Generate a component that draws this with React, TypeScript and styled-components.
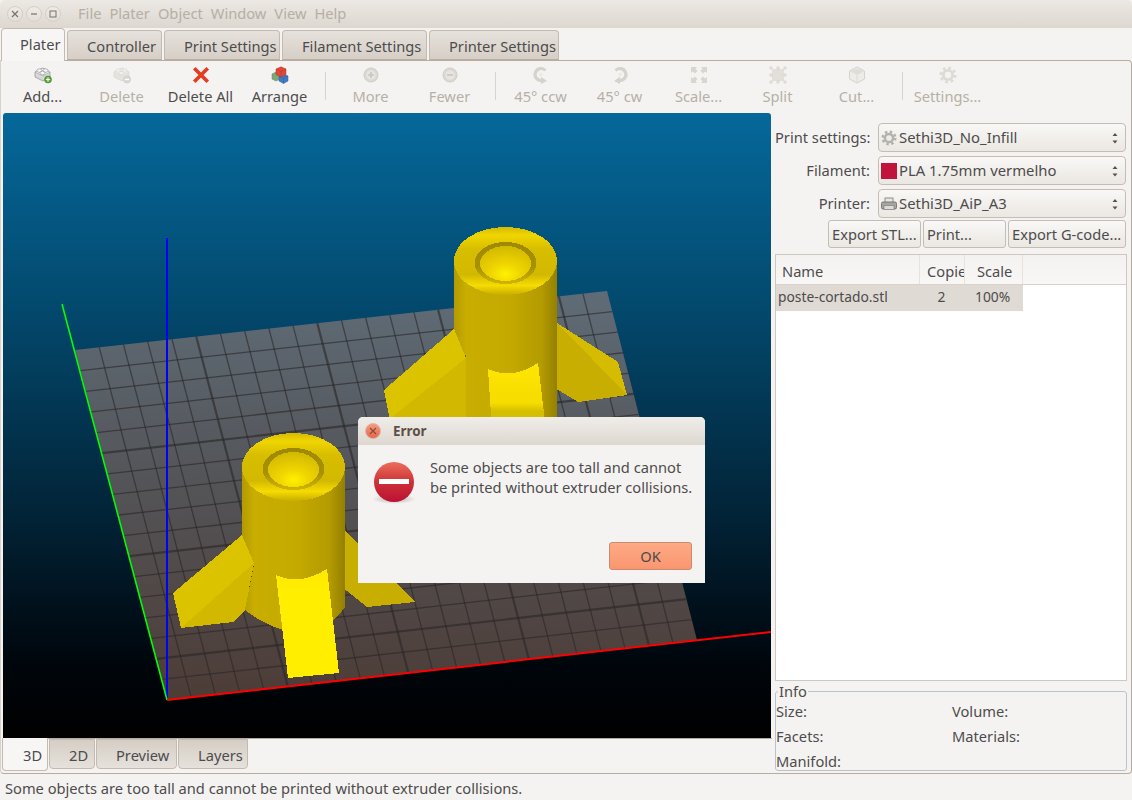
import React from "react";
import styled, { createGlobalStyle } from "styled-components";

const Global = createGlobalStyle`
  html, body { margin: 0; padding: 0; background: #f5f3f1; }
  * { box-sizing: border-box; }
  #root { width: 1132px; height: 800px; overflow: hidden; }
`;

const Page = styled.div`
  position: relative;
  width: 1132px;
  height: 800px;
  display: flex;
  flex-direction: column;
  background: #f5f3f1;
  color: #4c4c4c;
  font-family: "Noto Sans", "Open Sans", sans-serif;
  font-size: 14.67px;
  line-height: 17px;
`;

const TitleBar = styled.div`
  height: 28px;
  flex: none;
  display: flex;
  align-items: center;
  padding-left: 7px;
  background: linear-gradient(#ece8e3, #ddd7d0);
  border-radius: 5px 5px 0 0;
`;

const WinButtons = styled.div`
  display: flex;
  gap: 3px;
  margin-right: 17px;
`;

const WinButton = styled.div`
  width: 16px;
  height: 16px;
  border-radius: 50%;
  border: 1px solid #d5cfc7;
  background: linear-gradient(#efebe6, #e3ded7);
  display: flex;
  align-items: center;
  justify-content: center;
`;

const MenuBar = styled.div`
  display: flex;
  gap: 8px;
  margin-bottom: 2px;
`;

const MenuItem = styled.span`
  color: #b4afa6;
`;

const TabStrip = styled.div`
  height: 32px;
  flex: none;
  display: flex;
  align-items: flex-end;
  gap: 2px;
  padding-left: 1px;
  position: relative;
  z-index: 1;
`;

const Tab = styled.div<{ $w: number; $active?: boolean }>`
  width: ${(p) => p.$w}px;
  height: ${(p) => (p.$active ? 33 : 30)}px;
  margin-bottom: ${(p) => (p.$active ? -1 : 0)}px;
  padding-left: ${(p) => (p.$active ? 18 : 19)}px;
  padding-top: 7px;
  border: 1px solid #c4bbb0;
  border-bottom: ${(p) => (p.$active ? "none" : "1px solid #b8ad9f")};
  border-radius: 4px 4px 0 0;
  background: ${(p) => (p.$active ? "#f7f6f4" : "linear-gradient(#e6e1db, #d6cfc7)")};
  white-space: nowrap;
`;

const Notebook = styled.div`
  height: 714px;
  flex: none;
  display: flex;
  flex-direction: column;
  border: 1px solid #b8ad9f;
  border-left-color: #d8d2ca;
  border-radius: 0 4px 4px 4px;
  background: #f5f3f1;
`;

const Toolbar = styled.div`
  height: 52px;
  flex: none;
  display: flex;
  padding-left: 2px;
`;

const ToolItem = styled.div<{ $off?: boolean }>`
  width: 79px;
  display: flex;
  flex-direction: column;
  align-items: center;
  padding-top: 5px;
  color: ${(p) => (p.$off ? "#b5b0a6" : "#4c4c4c")};
  white-space: nowrap;
`;

const ToolIcon = styled.svg`
  width: 18px;
  height: 18px;
  flex: none;
  margin-bottom: 4px;
`;

const ToolSep = styled.div`
  width: 12px;
  display: flex;
  justify-content: center;
  padding: 11px 0 13px;
  &::before {
    content: "";
    width: 1px;
    background: #d8d3cc;
  }
`;

const Body = styled.div`
  flex: 1;
  display: flex;
  padding-left: 2px;
  min-height: 0;
`;

const LeftColumn = styled.div`
  width: 769px;
  flex: none;
  display: flex;
  flex-direction: column;
`;

const Canvas = styled.svg`
  display: block;
  width: 768px;
  height: 625px;
  flex: none;
  border-radius: 3px 3px 0 0;
`;

const BottomTabs = styled.div`
  height: 33px;
  display: flex;
  gap: 1px;
  margin-left: -1px;
  border-top: 1px solid #b8ad9f;
  position: relative;
`;

const BottomTab = styled.div<{ $w: number; $active?: boolean }>`
  width: ${(p) => p.$w}px;
  height: ${(p) => (p.$active ? 33 : 30)}px;
  margin-top: ${(p) => (p.$active ? -1 : 0)}px;
  padding: ${(p) => (p.$active ? 9 : 7)}px 0 0 ${(p) => (p.$active ? 20 : 19)}px;
  border: 1px solid #c4bbb0;
  border-top: ${(p) => (p.$active ? "none" : "1px solid #c4bbb0")};
  border-radius: 0 0 4px 4px;
  background: ${(p) => (p.$active ? "#f7f6f4" : "linear-gradient(#d5cec6, #e6e1db)")};
`;

const RightColumn = styled.div`
  width: 352px;
  flex: none;
  margin-left: 3px;
  padding-top: 10px;
  display: flex;
  flex-direction: column;
`;

const FormGrid = styled.div`
  display: grid;
  grid-template-columns: 95px 248px;
  grid-auto-rows: 29px;
  column-gap: 8px;
  row-gap: 4px;
`;

const FormLabel = styled.label`
  text-align: right;
  align-self: center;
  white-space: nowrap;
`;

const Combo = styled.div`
  display: flex;
  align-items: center;
  gap: 2px;
  padding: 0 6px 0 2px;
  border: 1px solid #c4bdb3;
  border-radius: 4px;
  background: linear-gradient(#f9f8f6, #ebe7e2);
`;

const ComboIcon = styled.svg`
  width: 16px;
  height: 16px;
  flex: none;
`;

const ComboText = styled.span`
  flex: 1;
  font-size: 14.85px;
`;

const Swatch = styled.span`
  width: 16px;
  height: 16px;
  flex: none;
  background: #c0143c;
`;

const Spinner = styled.svg`
  width: 8px;
  height: 14px;
  flex: none;
`;

const ButtonRow = styled.div`
  display: flex;
  justify-content: flex-end;
  gap: 2px;
  margin: 2px 1px 0 0;
`;

const PushButton = styled.div<{ $w: number }>`
  width: ${(p) => p.$w}px;
  height: 28px;
  padding: 5px 0 0 3px;
  border: 1px solid #c4bdb3;
  border-radius: 3px;
  background: linear-gradient(#f9f8f6, #ebe7e2);
  white-space: nowrap;
  overflow: hidden;
`;

const ListBox = styled.div`
  margin-top: 6px;
  height: 427px;
  flex: none;
  border: 1px solid #cfc8be;
  background: #fff;
`;

const ListHeader = styled.div`
  height: 30px;
  display: flex;
  background: linear-gradient(#f4f2f0, #f8f7f6);
  border-bottom: 1px solid #d8d2ca;
`;

const HeaderCell = styled.div<{ $w: number; $pad: number }>`
  width: ${(p) => p.$w}px;
  padding: 8px 0 0 ${(p) => p.$pad}px;
  border-right: 1px solid #e6e2dc;
  white-space: nowrap;
  overflow: hidden;
`;

const ListRow = styled.div`
  width: 247px;
  height: 26px;
  display: flex;
  align-items: center;
  padding-bottom: 4px;
  background: #dfdad3;
`;

const Cell = styled.span<{ $w: number; $pad?: number; $center?: boolean }>`
  width: ${(p) => p.$w}px;
  padding-left: ${(p) => p.$pad ?? 0}px;
  text-align: ${(p) => (p.$center ? "center" : "left")};
  font-size: 13.8px;
  white-space: nowrap;
`;

const InfoBox = styled.fieldset`
  margin: 3px 0 0;
  padding: 0;
  height: 87px;
  border: 1px solid #b9c3ce;
  border-radius: 3px;
  display: grid;
  grid-template-columns: 176px 1fr;
  grid-auto-rows: 25px;
  align-items: center;
  align-content: start;
`;

const InfoLegend = styled.legend`
  margin-left: 2px;
  padding: 0 1px;
  line-height: 15px;
`;

const InfoLabel = styled.span`
  white-space: nowrap;
`;

const StatusBar = styled.div`
  flex: 1;
  display: flex;
  align-items: center;
  padding: 2px 0 0 5px;
  white-space: nowrap;
`;

const Dialog = styled.div`
  position: absolute;
  left: 358px;
  top: 417px;
  width: 347px;
  height: 166px;
  display: flex;
  flex-direction: column;
  background: #f5f3f1;
  border-radius: 5px 5px 0 0;
  z-index: 2;
`;

const DialogTitle = styled.div`
  height: 28px;
  flex: none;
  display: flex;
  align-items: center;
  gap: 12px;
  padding-left: 7px;
  background: linear-gradient(#f0ede9, #ddd7d0);
  border-radius: 5px 5px 0 0;
  font-weight: 700;
  font-size: 13.4px;
  color: #5d4f47;
`;

const DialogClose = styled.div`
  width: 16px;
  height: 16px;
  border-radius: 50%;
  border: 1px solid #d8b5a5;
  background: linear-gradient(#f59a80, #e9674a);
  display: flex;
  align-items: center;
  justify-content: center;
`;

const DialogBody = styled.div`
  flex: 1;
  display: flex;
  padding: 12px 0 0 14px;
  gap: 14px;
`;

const ErrorIcon = styled.svg`
  width: 44px;
  height: 44px;
  flex: none;
  margin-top: 4px;
`;

const DialogText = styled.div`
  line-height: 20px;
  white-space: nowrap;
`;

const DialogActions = styled.div`
  display: flex;
  justify-content: flex-end;
  padding: 0 13px 13px 0;
`;

const OkButton = styled.div`
  width: 83px;
  height: 28px;
  display: flex;
  align-items: center;
  justify-content: center;
  border: 1px solid #c98a6e;
  border-radius: 3px;
  background: linear-gradient(#fdaa85, #fa966f);
`;

/* ---------- small icons ---------- */

const Brick: React.FC<{ off?: boolean; badge: "plus" | "minus" }> = ({ off, badge }) => {
  const stroke = off ? "#d8d4ce" : "#8f8f8f";
  const face = off ? "#f1efec" : "#f4f4f4";
  const side = off ? "#e6e3df" : "#d8d8d8";
  return (
    <ToolIcon viewBox="0 0 18 18">
      <path d="M1 6 L9 2 L16 6 V11 L9 15 L1 11 Z" fill={side} stroke={stroke} strokeWidth=".7" />
      <path d="M1 6 L9 2 L16 6 L9 10 Z" fill={face} stroke={stroke} strokeWidth=".5" />
      <ellipse cx="5.5" cy="4.6" rx="2.6" ry="1.8" fill={face} stroke={stroke} strokeWidth=".6" />
      <ellipse cx="11.5" cy="4.6" rx="2.6" ry="1.8" fill={face} stroke={stroke} strokeWidth=".6" />
      <ellipse cx="8.5" cy="7" rx="2.6" ry="1.8" fill={face} stroke={stroke} strokeWidth=".6" />
      <circle cx="14" cy="13.5" r="3.5" fill={badge === "plus" ? "#5aa83c" : "#dcd9d4"} stroke={badge === "plus" ? "#3f7f28" : "#c8c4be"} strokeWidth=".6" />
      <path d={badge === "plus" ? "M12 13.5 H16 M14 11.5 V15.5" : "M12 13.5 H16"} stroke="#fff" strokeWidth="1.2" />
    </ToolIcon>
  );
};

const DeleteAllIcon = () => (
  <ToolIcon viewBox="0 0 18 18">
    <path d="M3.5 3.5 L14.5 14.5 M14.5 3.5 L3.5 14.5" stroke="#e53b22" strokeWidth="3.6" strokeLinecap="square" />
  </ToolIcon>
);

const ArrangeIcon = () => (
  <ToolIcon viewBox="0 0 18 18">
    <path d="M1 8 L5 6 L9 8 V13 L5 15 L1 13 Z" fill="#7fa878" stroke="#5f8459" strokeWidth=".5" />
    <path d="M8 10 L12.5 8 L17 10 V15 L12.5 17.5 L8 15 Z" fill="#3f7cc4" stroke="#2f5f9c" strokeWidth=".5" />
    <path d="M8 10 L12.5 12.3 L17 10 M12.5 12.3 V17.5" fill="none" stroke="#2f5f9c" strokeWidth=".5" />
    <path d="M5 3 L10 .8 L15 3 V8.5 L10 11 L5 8.5 Z" fill="#df4a38" stroke="#b03426" strokeWidth=".5" />
    <path d="M5 3 L10 5.4 L15 3 M10 5.4 V11" fill="none" stroke="#b03426" strokeWidth=".5" />
  </ToolIcon>
);

const RoundIcon: React.FC<{ plus?: boolean }> = ({ plus }) => (
  <ToolIcon viewBox="0 0 18 18">
    <circle cx="9" cy="9" r="7" fill="#dcd9d4" stroke="#d0ccc6" />
    <circle cx="9" cy="9" r="4.6" fill="#e8e5e1" />
    <path d={plus ? "M6 9 H12 M9 6 V12" : "M6 9 H12"} stroke="#c9c5bf" strokeWidth="1.6" />
  </ToolIcon>
);

const RotateIcon: React.FC<{ flip?: boolean }> = ({ flip }) => (
  <ToolIcon viewBox="0 0 18 18">
    <g transform={flip ? "matrix(-1 0 0 1 18 0)" : undefined}>
      <path d="M13.5 4.5 A6 6 0 1 0 9.5 14.5" fill="none" stroke="#d6d2cc" strokeWidth="3.2" />
      <path d="M9 10.8 L15 15 L9 18 Z" fill="#d6d2cc" />
      <circle cx="9" cy="8.5" r="1.8" fill="#ebe8e5" />
    </g>
  </ToolIcon>
);

const ScaleIcon = () => (
  <ToolIcon viewBox="0 0 18 18">
    <g fill="#d9d5cf">
      <path d="M1 1 H7 L5.5 2.8 L7.5 5 L5 7.5 L2.8 5.5 L1 7 Z" />
      <path d="M17 1 H11 L12.5 2.8 L10.5 5 L13 7.5 L15.2 5.5 L17 7 Z" />
      <path d="M1 17 H7 L5.5 15.2 L7.5 13 L5 10.5 L2.8 12.5 L1 11 Z" />
      <path d="M17 17 H11 L12.5 15.2 L10.5 13 L13 10.5 L15.2 12.5 L17 11 Z" />
    </g>
  </ToolIcon>
);

const SplitIcon = () => (
  <ToolIcon viewBox="0 0 18 18">
    <rect x="3" y="3" width="12" height="12" fill="#e2dfda" />
    {[[2, 2], [9, 2], [16, 2], [2, 9], [2, 16], [9, 16], [16, 16], [16, 9]].map(([x, y]) => (
      <circle key={`${x}-${y}`} cx={x} cy={y} r="1.2" fill="#f5f3f1" stroke="#c8c4be" strokeWidth=".7" />
    ))}
  </ToolIcon>
);

const CutIcon = () => (
  <ToolIcon viewBox="0 0 18 18">
    <path d="M9 1 L16.5 5 V13 L9 17 L1.5 13 V5 Z" fill="#eeece9" stroke="#d6d2cc" />
    <path d="M1.5 5 L9 9 L16.5 5 L9 3 Z" fill="#e0ddd8" />
    <path d="M9 9 V17" stroke="#dcd9d4" />
  </ToolIcon>
);

const GearIcon = () => (
  <ToolIcon viewBox="0 0 18 18">
    <circle cx="9" cy="9" r="6" fill="#dedbd6" />
    <circle cx="9" cy="9" r="7" fill="none" stroke="#dedbd6" strokeWidth="3" strokeDasharray="2.75 2.75" />
    <circle cx="9" cy="9" r="3.2" fill="#f5f3f1" />
  </ToolIcon>
);

const ComboGear = () => (
  <ComboIcon viewBox="0 0 18 18">
    <circle cx="9" cy="9" r="6" fill="#b5b2ad" />
    <circle cx="9" cy="9" r="7" fill="none" stroke="#b5b2ad" strokeWidth="3" strokeDasharray="2.75 2.75" />
    <circle cx="9" cy="9" r="3.2" fill="#ececea" />
  </ComboIcon>
);

const ComboPrinter = () => (
  <ComboIcon viewBox="0 0 16 16">
    <rect x="4" y="2" width="8" height="5" fill="#e8e6e2" stroke="#777" strokeWidth=".8" />
    <rect x=".5" y="6" width="15" height="7" rx="1.5" fill="#a9a6a1" stroke="#666" strokeWidth=".8" />
    <rect x="3" y="9.5" width="10" height="4" fill="#dedbd6" stroke="#777" strokeWidth=".6" />
  </ComboIcon>
);

const SpinArrows = () => (
  <Spinner viewBox="0 0 8 14">
    <path d="M4 2 L6.5 5 H1.5 Z M4 12.5 L6.5 9.5 H1.5 Z" fill="#55504a" />
  </Spinner>
);

const CloseGlyph: React.FC<{ color: string }> = ({ color }) => (
  <svg width="8" height="8" viewBox="0 0 8 8">
    <path d="M1 1 L7 7 M7 1 L1 7" stroke={color} strokeWidth="1.2" />
  </svg>
);

/* ---------- the 3D view ---------- */

type P = [number, number];
const quad: [P, P, P, P] = [[75, 350], [607, 291], [697, 640], [167, 700]];

const makeMap = ([p0, p1, p2, p3]: [P, P, P, P]) => {
  const dx1 = p1[0] - p2[0], dx2 = p3[0] - p2[0], sx = p0[0] - p1[0] + p2[0] - p3[0];
  const dy1 = p1[1] - p2[1], dy2 = p3[1] - p2[1], sy = p0[1] - p1[1] + p2[1] - p3[1];
  const den = dx1 * dy2 - dx2 * dy1;
  const g = (sx * dy2 - dx2 * sy) / den;
  const h = (dx1 * sy - sx * dy1) / den;
  const a = p1[0] - p0[0] + g * p1[0], b = p3[0] - p0[0] + h * p3[0];
  const d = p1[1] - p0[1] + g * p1[1], e = p3[1] - p0[1] + h * p3[1];
  return (u: number, v: number): P => {
    const w = g * u + h * v + 1;
    return [(a * u + b * v + p0[0]) / w, (d * u + e * v + p0[1]) / w];
  };
};

const plateMap = makeMap(quad);
const pts = (list: P[]) => list.map((p) => p.join(",")).join(" ");

const PlateGrid = () => {
  const lines: React.ReactNode[] = [];
  const nu = 22, nv = 17;
  for (let i = 1; i < nu; i++) {
    const [x1, y1] = plateMap(i / nu, 0), [x2, y2] = plateMap(i / nu, 1);
    lines.push(<line key={`u${i}`} x1={x1} y1={y1} x2={x2} y2={y2} strokeWidth={i % 5 === 0 ? 2.2 : 1.3} />);
  }
  for (let j = 1; j < nv; j++) {
    const [x1, y1] = plateMap(0, j / nv), [x2, y2] = plateMap(1, j / nv);
    lines.push(<line key={`v${j}`} x1={x1} y1={y1} x2={x2} y2={y2} strokeWidth={j % 5 === 0 ? 2.2 : 1.3} />);
  }
  return <g stroke="#2a2727" strokeOpacity=".62">{lines}</g>;
};

const CylinderTop: React.FC<{ cx: number; cy: number }> = ({ cx, cy }) => (
  <g>
    <ellipse cx={cx} cy={cy} rx="51.5" ry="34" fill="url(#rim)" />
    <ellipse cx={cx} cy={cy + 2} rx="31" ry="21" fill="url(#hollow)" />
    <ellipse cx={cx} cy={cy + 2.5} rx="25.5" ry="17.5" fill="url(#dome)" />
  </g>
);

const Canvas3D = () => (
  <Canvas viewBox="3 113 768 625">
    <defs>
      <linearGradient id="sky" x1="0" y1="0" x2="0" y2="1">
        <stop offset="0" stopColor="#05689a" />
        <stop offset=".3" stopColor="#034a6f" />
        <stop offset=".62" stopColor="#02263b" />
        <stop offset=".88" stopColor="#00060c" />
        <stop offset="1" stopColor="#000" />
      </linearGradient>
      <linearGradient id="plate" gradientUnits="userSpaceOnUse" x1="0" y1="291" x2="0" y2="700">
        <stop offset="0" stopColor="#5f6c77" />
        <stop offset=".45" stopColor="#545559" />
        <stop offset="1" stopColor="#4d3c36" />
      </linearGradient>
      <linearGradient id="body" x1="0" y1="0" x2="1" y2="0">
        <stop offset="0" stopColor="#b39a00" />
        <stop offset=".12" stopColor="#c9ae00" />
        <stop offset=".55" stopColor="#c4a900" />
        <stop offset=".85" stopColor="#b49b00" />
        <stop offset="1" stopColor="#948000" />
      </linearGradient>
      <linearGradient id="rim" x1="0" y1="0" x2="0" y2="1">
        <stop offset="0" stopColor="#d4b900" />
        <stop offset=".12" stopColor="#f0d600" />
        <stop offset=".32" stopColor="#d8be00" />
        <stop offset=".7" stopColor="#d2b800" />
        <stop offset=".86" stopColor="#f6dc00" />
        <stop offset="1" stopColor="#c8ad00" />
      </linearGradient>
      <linearGradient id="hollow" x1="0" y1="0" x2="0" y2="1">
        <stop offset="0" stopColor="#9e8800" />
        <stop offset=".6" stopColor="#a89100" />
        <stop offset="1" stopColor="#d0b600" />
      </linearGradient>
      <radialGradient id="dome" cx=".5" cy=".8" r=".8">
        <stop offset="0" stopColor="#fff200" />
        <stop offset=".35" stopColor="#f0d600" />
        <stop offset="1" stopColor="#d2b800" />
      </radialGradient>
      <linearGradient id="fin" x1="0" y1="0" x2="0" y2="1">
        <stop offset="0" stopColor="#ffe800" />
        <stop offset=".2" stopColor="#ffee00" />
        <stop offset="1" stopColor="#ffee00" />
      </linearGradient>
      <linearGradient id="backFin" gradientUnits="userSpaceOnUse" x1="0" y1="363" x2="0" y2="420">
        <stop offset="0" stopColor="#ffe600" />
        <stop offset=".7" stopColor="#f6dc00" />
        <stop offset=".85" stopColor="#d6be00" />
        <stop offset="1" stopColor="#d6be00" />
      </linearGradient>
    </defs>
    <rect x="3" y="113" width="768" height="625" fill="url(#sky)" />
    <polygon points={pts(quad)} fill="url(#plate)" />
    <PlateGrid />
    <g shapeRendering="crispEdges">
      {/* back object */}
      <polygon points="557,323 618,362 627,395 578,402 555,388" fill="#c8ae00" />
      <polygon points="557,323 618,362 627,395" fill="#d6bc00" />
      <polygon points="466,355 466,430 557,430 557,265 454,265 454,345" fill="url(#body)" />
      <polygon points="384,390 454,329 466,358 466,430 392,430" fill="#dcc300" />
      <polygon points="392,417 466,358 466,430 392,430" fill="#d2b900" />
      <path d="M488,369 Q513,380 538,363 L546,430 H492 Z" fill="url(#backFin)" />
      <CylinderTop cx={505.5} cy={261} />
      {/* front object */}
      <polygon points="345,530 415,602 367,607 342,587" fill="#c8ae00" />
      <path d="M242,470 V553 Q246,561 254,565 L245,610 Q268,628 293,632 L327,625 Q340,615 345,607 V470 Z" fill="url(#body)" />
      <polygon points="173,593 242,535 254,563 181,628" fill="#dcc300" />
      <polygon points="181,628 254,563 245,610 233,622" fill="#d2b900" />
      <path d="M276,575 L288,678 L284,640 Z" fill="#a89000" />
      <path d="M276,575 Q300,586 327,569 L339,673 L288,678 Z" fill="url(#fin)" />
      <CylinderTop cx={293.5} cy={467} />
    </g>
    <line x1="167" y1="700" x2="167" y2="238" stroke="#0000ff" strokeWidth="2" />
    <line x1="167" y1="700" x2="62" y2="304" stroke="#00ff00" strokeWidth="1.6" />
    <line x1="167" y1="700" x2="771" y2="632" stroke="#ff0000" strokeWidth="2" />
  </Canvas>
);

export default function App() {
  return (
    <Page>
      <Global />
      <TitleBar>
        <WinButtons>
          <WinButton><CloseGlyph color="#77726b" /></WinButton>
          <WinButton>
            <svg width="8" height="8" viewBox="0 0 8 8"><path d="M1 4 H7" stroke="#77726b" strokeWidth="1.2" /></svg>
          </WinButton>
          <WinButton>
            <svg width="8" height="8" viewBox="0 0 8 8"><rect x="1" y="1" width="6" height="6" fill="none" stroke="#77726b" /></svg>
          </WinButton>
        </WinButtons>
        <MenuBar>
          {["File", "Plater", "Object", "Window", "View", "Help"].map((m) => (
            <MenuItem key={m}>{m}</MenuItem>
          ))}
        </MenuBar>
      </TitleBar>

      <TabStrip>
        <Tab $w={64} $active>Plater</Tab>
        <Tab $w={95}>Controller</Tab>
        <Tab $w={116}>Print Settings</Tab>
        <Tab $w={145}>Filament Settings</Tab>
        <Tab $w={130}>Printer Settings</Tab>
      </TabStrip>

      <Notebook>
        <Toolbar>
          <ToolItem><Brick badge="plus" />Add...</ToolItem>
          <ToolItem $off><Brick off badge="minus" />Delete</ToolItem>
          <ToolItem><DeleteAllIcon />Delete All</ToolItem>
          <ToolItem><ArrangeIcon />Arrange</ToolItem>
          <ToolSep />
          <ToolItem $off><RoundIcon plus />More</ToolItem>
          <ToolItem $off><RoundIcon />Fewer</ToolItem>
          <ToolSep />
          <ToolItem $off><RotateIcon />45° ccw</ToolItem>
          <ToolItem $off><RotateIcon flip />45° cw</ToolItem>
          <ToolItem $off><ScaleIcon />Scale...</ToolItem>
          <ToolItem $off><SplitIcon />Split</ToolItem>
          <ToolItem $off><CutIcon />Cut...</ToolItem>
          <ToolSep />
          <ToolItem $off><GearIcon />Settings...</ToolItem>
        </Toolbar>

        <Body>
          <LeftColumn>
            <Canvas3D />
            <BottomTabs>
              <BottomTab $w={46} $active>3D</BottomTab>
              <BottomTab $w={46}>2D</BottomTab>
              <BottomTab $w={81}>Preview</BottomTab>
              <BottomTab $w={70}>Layers</BottomTab>
            </BottomTabs>
          </LeftColumn>

          <RightColumn>
            <FormGrid>
              <FormLabel>Print settings:</FormLabel>
              <Combo><ComboGear /><ComboText>Sethi3D_No_Infill</ComboText><SpinArrows /></Combo>
              <FormLabel>Filament:</FormLabel>
              <Combo><Swatch /><ComboText>PLA 1.75mm vermelho</ComboText><SpinArrows /></Combo>
              <FormLabel>Printer:</FormLabel>
              <Combo><ComboPrinter /><ComboText>Sethi3D_AiP_A3</ComboText><SpinArrows /></Combo>
            </FormGrid>

            <ButtonRow>
              <PushButton $w={93}>Export STL...</PushButton>
              <PushButton $w={83}>Print...</PushButton>
              <PushButton $w={118}>Export G-code...</PushButton>
            </ButtonRow>

            <ListBox>
              <ListHeader>
                <HeaderCell $w={144} $pad={6}>Name</HeaderCell>
                <HeaderCell $w={45} $pad={7}>Copies</HeaderCell>
                <HeaderCell $w={58} $pad={12}>Scale</HeaderCell>
              </ListHeader>
              <ListRow>
                <Cell $w={144} $pad={2}>poste-cortado.stl</Cell>
                <Cell $w={43} $center>2</Cell>
                <Cell $w={60} $pad={12}>100%</Cell>
              </ListRow>
            </ListBox>

            <InfoBox>
              <InfoLegend>Info</InfoLegend>
              <InfoLabel>Size:</InfoLabel>
              <InfoLabel>Volume:</InfoLabel>
              <InfoLabel>Facets:</InfoLabel>
              <InfoLabel>Materials:</InfoLabel>
              <InfoLabel>Manifold:</InfoLabel>
            </InfoBox>
          </RightColumn>
        </Body>
      </Notebook>

      <StatusBar>Some objects are too tall and cannot be printed without extruder collisions.</StatusBar>

      <Dialog>
        <DialogTitle>
          <DialogClose><CloseGlyph color="#8a4a38" /></DialogClose>
          Error
        </DialogTitle>
        <DialogBody>
          <ErrorIcon viewBox="0 0 44 44">
            <defs>
              <linearGradient id="errorFill" x1="0" y1="0" x2="0" y2="1">
                <stop offset="0" stopColor="#ec6e5c" />
                <stop offset=".5" stopColor="#cc3236" />
                <stop offset="1" stopColor="#bd1035" />
              </linearGradient>
              <radialGradient id="errorShadow">
                <stop offset="0" stopColor="#000" stopOpacity=".28" />
                <stop offset="1" stopColor="#000" stopOpacity="0" />
              </radialGradient>
            </defs>
            <ellipse cx="22" cy="38" rx="22" ry="5" fill="url(#errorShadow)" />
            <circle cx="22" cy="21" r="20" fill="url(#errorFill)" />
            <rect x="7" y="18" width="30" height="5" fill="#fff" />
          </ErrorIcon>
          <DialogText>
            Some objects are too tall and cannot
            <br />
            be printed without extruder collisions.
          </DialogText>
        </DialogBody>
        <DialogActions>
          <OkButton>OK</OkButton>
        </DialogActions>
      </Dialog>
    </Page>
  );
}
